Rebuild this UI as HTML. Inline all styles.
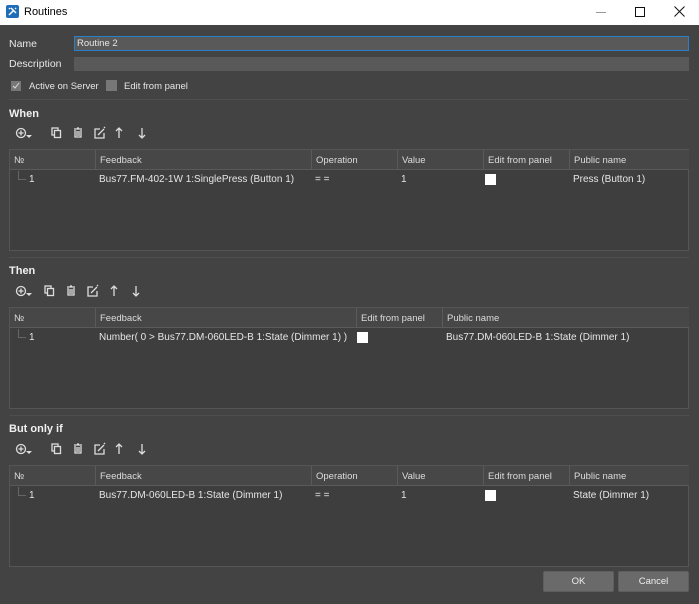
<!DOCTYPE html>
<html><head><meta charset="utf-8"><style>
*{margin:0;padding:0;box-sizing:border-box}
body{width:699px;height:604px;background:#434343;font-family:"Liberation Sans",sans-serif;font-size:9.5px;color:#e6e6e6;position:relative;overflow:hidden}
.a{position:absolute}
.title{left:0;top:0;width:699px;height:25px;background:#fff;color:#000;font-size:11px}
.inp{background:#595959;height:14px}
.lbl{font-size:10.5px;color:#e8e8e8}
.hdr{font-weight:bold;font-size:11px;color:#f0f0f0}
.sep{height:1px;background:#2f2f2f;border-bottom:1px solid #4e4e4e;left:9px;width:680px}
.tbl{background:#3e3e3e;border:1px solid #555}
.th{position:absolute;top:0;height:20px;background:#474747;border-right:1px solid #5a5a5a;border-bottom:1px solid #5a5a5a;padding:5px 0 0 4px;color:#dcdcdc;white-space:nowrap;overflow:hidden}
.td{position:absolute;top:21px;padding:3px 0 0 3px;white-space:nowrap;color:#e6e6e6;font-size:10px}
.cb{position:absolute;width:11px;height:11px;background:#fff}
.btn{background:#6a6a6a;border:1px solid #5e5e5e;border-radius:2px;text-align:center;line-height:20px;color:#eee;width:71px;height:21px;top:571px}
</style></head><body>
<div class="a title">
 <svg class="a" style="left:6px;top:5px" width="13" height="13" viewBox="0 0 13 13"><rect width="13" height="13" rx="2" fill="#1e6fb8"/><path d="M3 10L8 5M5 3l5 5M9 3l1 1M3 4l1-1" stroke="#fff" stroke-width="1.5"/></svg>
 <span class="a" style="left:24px;top:6px">Routines</span>
 <div class="a" style="left:596px;top:12px;width:10px;height:1px;background:#999"></div>
 <div class="a" style="left:635px;top:7px;width:10px;height:10px;border:1px solid #111"></div>
 <svg class="a" style="left:674px;top:6px" width="11" height="11"><path d="M0.5 0.5L10.5 10.5M10.5 0.5L0.5 10.5" stroke="#111"/></svg>
</div>
<span class="a lbl" style="left:9px;top:38px">Name</span>
<div class="a inp" style="left:74px;top:36px;width:615px;height:15px;border:1px solid #2a7fc7;padding:1px 2px;font-size:9.5px">Routine 2</div>
<span class="a lbl" style="left:9px;top:58px">Description</span>
<div class="a inp" style="left:74px;top:57px;width:615px"></div>
<div class="a" style="left:11px;top:81px;width:10px;height:10px;background:#777"></div>
<svg class="a" style="left:11px;top:81px" width="10" height="10"><path d="M2 5l2 2 4-5" stroke="#ddd" fill="none"/></svg>
<span class="a" style="left:29px;top:81px">Active on Server</span>
<div class="a" style="left:106px;top:80px;width:11px;height:11px;background:#777"></div>
<span class="a" style="left:124px;top:81px">Edit from panel</span>
<div class="a sep" style="top:99px"></div>

<span class="a hdr" style="left:9px;top:108px">When</span>
<svg class="a" style="left:14px;top:125px" width="140" height="16" viewBox="0 0 140 16" fill="none" stroke="#ddd" stroke-width="1.3">
<circle cx="7" cy="8" r="4.5"/><path d="M7 5.5v5M4.5 8h5"/><path d="M12 10h6l-3 3z" fill="#ddd" stroke="none"/>
<rect x="38" y="3" width="6" height="7"/><rect x="40.5" y="5.5" width="6" height="7" fill="#434343"/>
<path d="M60 4h8M63 3h2M61 5v7h6V5M63 6v5M65 6v5"/>
<path d="M86 4h-5v9h9V8M84 10l6-6"/><path d="M90 2l1 1"/>
<path d="M105 13V3M102 6l3-3 3 3"/>
<path d="M128 3v10M125 10l3 3 3-3"/>
</svg>
<div class="a tbl" style="left:9px;top:149px;width:680px;height:102px">
 <div class="th" style="left:0;width:86px">№</div>
 <div class="th" style="left:86px;width:216px">Feedback</div>
 <div class="th" style="left:302px;width:86px">Operation</div>
 <div class="th" style="left:388px;width:86px">Value</div>
 <div class="th" style="left:474px;width:86px">Edit from panel</div>
 <div class="th" style="left:560px;width:119px;border-right:none">Public name</div>
 <div class="a" style="left:8px;top:21px;width:1px;height:8px;background:#666"></div><div class="a" style="left:8px;top:29px;width:8px;height:1px;background:#666"></div>
 <div class="td" style="left:16px">1</div>
 <div class="td" style="left:86px">Bus77.FM-402-1W 1:SinglePress (Button 1)</div>
 <div class="td" style="left:302px">= =</div>
 <div class="td" style="left:388px">1</div>
 <div class="cb" style="left:475px;top:24px"></div>
 <div class="td" style="left:560px">Press (Button 1)</div>
</div>
<div class="a sep" style="top:257px"></div>

<span class="a hdr" style="left:9px;top:265px">Then</span>
<svg class="a" style="left:12px;top:283px" width="140" height="16" viewBox="0 0 140 16" fill="none" stroke="#ddd" stroke-width="1.3">
<circle cx="9" cy="8" r="4.5"/><path d="M9 5.5v5M6.5 8h5"/><path d="M14 10h6l-3 3z" fill="#ddd" stroke="none"/>
<rect x="33" y="3" width="6" height="7"/><rect x="35.5" y="5.5" width="6" height="7" fill="#434343"/>
<path d="M55 4h8M58 3h2M56 5v7h6V5M58 6v5M60 6v5"/>
<path d="M81 4h-5v9h9V8M79 10l6-6"/><path d="M85 2l1 1"/>
<path d="M102 13V3M99 6l3-3 3 3"/>
<path d="M124 3v10M121 10l3 3 3-3"/>
</svg>
<div class="a tbl" style="left:9px;top:307px;width:680px;height:102px">
 <div class="th" style="left:0;width:86px">№</div>
 <div class="th" style="left:86px;width:261px">Feedback</div>
 <div class="th" style="left:347px;width:86px">Edit from panel</div>
 <div class="th" style="left:433px;width:246px;border-right:none">Public name</div>
 <div class="a" style="left:8px;top:21px;width:1px;height:8px;background:#666"></div><div class="a" style="left:8px;top:29px;width:8px;height:1px;background:#666"></div>
 <div class="td" style="left:16px">1</div>
 <div class="td" style="left:86px">Number( 0 &gt; Bus77.DM-060LED-B 1:State (Dimmer 1) )</div>
 <div class="cb" style="left:347px;top:24px"></div>
 <div class="td" style="left:433px">Bus77.DM-060LED-B 1:State (Dimmer 1)</div>
</div>
<div class="a sep" style="top:415px"></div>

<span class="a hdr" style="left:9px;top:423px">But only if</span>
<svg class="a" style="left:14px;top:441px" width="140" height="16" viewBox="0 0 140 16" fill="none" stroke="#ddd" stroke-width="1.3">
<circle cx="7" cy="8" r="4.5"/><path d="M7 5.5v5M4.5 8h5"/><path d="M12 10h6l-3 3z" fill="#ddd" stroke="none"/>
<rect x="38" y="3" width="6" height="7"/><rect x="40.5" y="5.5" width="6" height="7" fill="#434343"/>
<path d="M60 4h8M63 3h2M61 5v7h6V5M63 6v5M65 6v5"/>
<path d="M86 4h-5v9h9V8M84 10l6-6"/><path d="M90 2l1 1"/>
<path d="M105 13V3M102 6l3-3 3 3"/>
<path d="M128 3v10M125 10l3 3 3-3"/>
</svg>
<div class="a tbl" style="left:9px;top:465px;width:680px;height:102px">
 <div class="th" style="left:0;width:86px">№</div>
 <div class="th" style="left:86px;width:216px">Feedback</div>
 <div class="th" style="left:302px;width:86px">Operation</div>
 <div class="th" style="left:388px;width:86px">Value</div>
 <div class="th" style="left:474px;width:86px">Edit from panel</div>
 <div class="th" style="left:560px;width:119px;border-right:none">Public name</div>
 <div class="a" style="left:8px;top:21px;width:1px;height:8px;background:#666"></div><div class="a" style="left:8px;top:29px;width:8px;height:1px;background:#666"></div>
 <div class="td" style="left:16px">1</div>
 <div class="td" style="left:86px">Bus77.DM-060LED-B 1:State (Dimmer 1)</div>
 <div class="td" style="left:302px">= =</div>
 <div class="td" style="left:388px">1</div>
 <div class="cb" style="left:475px;top:24px"></div>
 <div class="td" style="left:560px">State (Dimmer 1)</div>
</div>
<div class="a btn" style="left:543px">OK</div>
<div class="a btn" style="left:618px">Cancel</div>
</body></html>
